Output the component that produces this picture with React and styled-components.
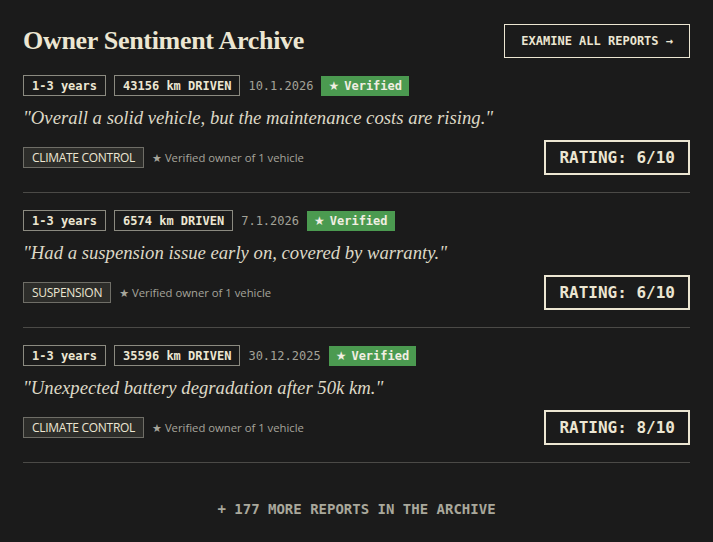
import styled, { createGlobalStyle } from "styled-components"

const GlobalStyle = createGlobalStyle`
  html, body {
    margin: 0;
    padding: 0;
    background: #1b1b1b;
  }
`

const MONO = `"DejaVu Sans Mono", "Liberation Mono", monospace`
const SERIF = `"Liberation Serif", "DejaVu Serif", serif`
const SANS = `"Open Sans", "Liberation Sans", sans-serif`

const Page = styled.div`
  background: #1b1b1b;
  color: #ece6d2;
  min-height: 542px;
  padding: 24px 23px 0;
  box-sizing: border-box;
`

const Header = styled.header`
  display: flex;
  justify-content: space-between;
  align-items: center;
  height: 34px;
`

const Title = styled.h1`
  margin: 0;
  font-family: ${SERIF};
  font-weight: 700;
  font-size: 26px;
  letter-spacing: -0.3px;
  color: #ece6d2;
`

const OutlineButton = styled.button`
  height: 34px;
  padding: 0 16px;
  background: transparent;
  border: 1px solid #ece6d2;
  color: #ece6d2;
  font-family: ${MONO};
  font-size: 12px;
  font-weight: 700;
  cursor: pointer;
`

const Card = styled.article`
  padding: 17px 0;
  border-bottom: 1px solid #4b4a47;
`

const MetaRow = styled.div`
  display: flex;
  align-items: center;
  gap: 8px;
  height: 21px;
`

const Tag = styled.span`
  display: inline-flex;
  align-items: center;
  height: 21px;
  box-sizing: border-box;
  padding: 0 8px;
  border: 1px solid #8b8a80;
  font-family: ${MONO};
  font-size: 12px;
  font-weight: 700;
  color: #ece6d2;
`

const DateText = styled.span`
  font-family: ${MONO};
  font-size: 12px;
  color: #a3a298;
`

const Verified = styled.span`
  display: inline-flex;
  align-items: center;
  height: 20px;
  padding: 0 7px;
  background: #4b9a50;
  font-family: ${MONO};
  font-size: 12px;
  font-weight: 700;
  color: #f1eee2;
`

const Star = styled.span`
  font-family: "DejaVu Sans", sans-serif;
  font-size: ${props => props.size || 12}px;
  margin-right: ${props => props.gap || 4}px;
`

const Quote = styled.p`
  margin: 8px 0 9px;
  font-family: ${SERIF};
  font-style: italic;
  font-size: 18.7px;
  line-height: 27px;
  color: #ddd8c6;
`

const BottomRow = styled.div`
  display: flex;
  align-items: center;
  justify-content: space-between;
  height: 35px;
`

const OwnerInfo = styled.div`
  display: flex;
  align-items: center;
  gap: 8px;
`

const Category = styled.span`
  display: inline-flex;
  align-items: center;
  height: 21px;
  box-sizing: border-box;
  padding: 0 8px;
  background: #2d2d2a;
  border: 1px solid #6f6e67;
  font-family: ${SANS};
  font-size: 12px;
  letter-spacing: -0.3px;
  color: #ece6d2;
`

const OwnerNote = styled.span`
  font-family: ${SANS};
  font-size: 11.3px;
  color: #a6a59b;
`

const Rating = styled.div`
  display: flex;
  align-items: center;
  height: 35px;
  box-sizing: border-box;
  padding: 0 13px;
  border: 2px solid #ece6d2;
  font-family: ${MONO};
  font-size: 16px;
  font-weight: 700;
  color: #ece6d2;
`

const Footer = styled.div`
  padding-top: 38px;
  text-align: center;
  font-family: ${MONO};
  font-size: 14px;
  font-weight: 600;
  color: #a9a89c;
`

const reports = [
  {
    age: "1-3 years",
    km: 43156,
    date: "10.1.2026",
    text: "Overall a solid vehicle, but the maintenance costs are rising.",
    category: "CLIMATE CONTROL",
    rating: 6,
  },
  {
    age: "1-3 years",
    km: 6574,
    date: "7.1.2026",
    text: "Had a suspension issue early on, covered by warranty.",
    category: "SUSPENSION",
    rating: 6,
  },
  {
    age: "1-3 years",
    km: 35596,
    date: "30.12.2025",
    text: "Unexpected battery degradation after 50k km.",
    category: "CLIMATE CONTROL",
    rating: 8,
  },
]

function ReportCard({ report }) {
  return (
    <Card>
      <MetaRow>
        <Tag>{report.age}</Tag>
        <Tag>{report.km} km DRIVEN</Tag>
        <DateText>{report.date}</DateText>
        <Verified>
          <Star size={12} gap={5}>★</Star>Verified
        </Verified>
      </MetaRow>
      <Quote>"{report.text}"</Quote>
      <BottomRow>
        <OwnerInfo>
          <Category>{report.category}</Category>
          <OwnerNote>
            <Star size={11} gap={3}>★</Star>Verified owner of 1 vehicle
          </OwnerNote>
        </OwnerInfo>
        <Rating>RATING: {report.rating}/10</Rating>
      </BottomRow>
    </Card>
  )
}

export default function App() {
  return (
    <Page>
      <GlobalStyle />
      <Header>
        <Title>Owner Sentiment Archive</Title>
        <OutlineButton>EXAMINE ALL REPORTS →</OutlineButton>
      </Header>
      {reports.map((r, i) => (
        <ReportCard key={i} report={r} />
      ))}
      <Footer>+ 177 MORE REPORTS IN THE ARCHIVE</Footer>
    </Page>
  )
}
